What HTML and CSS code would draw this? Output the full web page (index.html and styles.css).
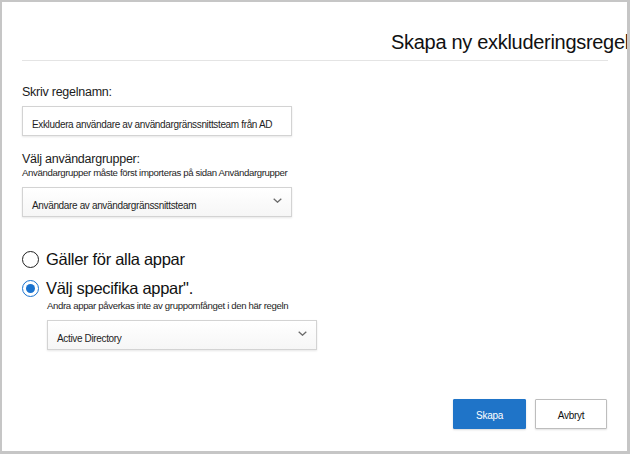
FILE: index.html
```html
<!DOCTYPE html>
<html lang="sv">
<head>
<meta charset="utf-8">
<title>Skapa ny exkluderingsregel</title>
<link rel="stylesheet" href="styles.css">
</head>
<body>
<div class="panel">
  <div class="header">
    <h1 class="title">Skapa ny exkluderingsregel</h1>
  </div>
  <div class="form">
    <div class="label label-name">Skriv regelnamn:</div>
    <div class="field input"><span class="field-text">Exkludera användare av användargränssnittsteam från AD</span></div>

    <div class="label label-groups">Välj användargrupper:</div>
    <div class="hint">Användargrupper måste först importeras på sidan Användargrupper</div>
    <div class="field select">
      <span class="field-text">Användare av användargränssnittsteam</span>
      <svg class="chev" viewBox="0 0 9 5" width="9" height="5"><polyline points="0.7,0.7 4.5,4.2 8.3,0.7" fill="none" stroke="#6a6a6a" stroke-width="1.3"/></svg>
    </div>

    <div class="radios">
      <div class="radio-row"><span class="radio"></span><span>Gäller för alla appar</span></div>
      <div class="radio-row"><span class="radio checked"></span><span>Välj specifika appar".</span></div>
    </div>
    <div class="sub">
      <div class="hint">Andra appar påverkas inte av gruppomfånget i den här regeln</div>
      <div class="field select">
        <span class="field-text">Active Directory</span>
        <svg class="chev" viewBox="0 0 9 5" width="9" height="5"><polyline points="0.7,0.7 4.5,4.2 8.3,0.7" fill="none" stroke="#6a6a6a" stroke-width="1.3"/></svg>
      </div>
    </div>
  </div>
  <div class="footer">
    <div class="btn btn-primary">Skapa</div>
    <div class="btn btn-secondary">Avbryt</div>
  </div>
</div>
</body>
</html>
```

FILE: styles.css
```css
* { box-sizing: border-box; }
html, body { margin: 0; padding: 0; }
body {
  background: #c6c6c6;
  font-family: "Liberation Sans", Arial, sans-serif;
  width: 630px;
  height: 454px;
  overflow: hidden;
  padding-top: 2px;
}
.panel {
  margin: 0 3px 0 2px;
  height: 449px;
  background: #fff;
  overflow: hidden;
}
.header {
  margin: 0 19px 0 20px;
  padding: 28px 0 6px;
  border-bottom: 1px solid #e4e4e4;
}
.title {
  margin: 0;
  padding-left: 369px;
  font-size: 20px;
  line-height: 24px;
  font-weight: normal;
  letter-spacing: -0.3px;
  white-space: nowrap;
  color: #111;
}
.form { padding: 0 20px; }
.label {
  font-size: 12.5px;
  line-height: 16px;
  letter-spacing: -0.25px;
  color: #1b1b1b;
}
.label-name { margin-top: 23px; }
.label-groups { margin-top: 15px; }
.hint {
  font-size: 9.6px;
  line-height: 12px;
  letter-spacing: -0.35px;
  color: #1e1e1e;
  white-space: nowrap;
}
.field {
  height: 30px;
  width: 270px;
  border: 1px solid #d3d3d3;
  display: flex;
  align-items: center;
  padding-left: 9px;
  font-size: 10px;
  letter-spacing: -0.35px;
  color: #1e1e1e;
  box-shadow: 0 1px 2px rgba(0, 0, 0, 0.1);
  background: #fff;
}
.field-text { flex: 1; padding-top: 6px; white-space: nowrap; }
.input { margin-top: 6px; }
.select {
  margin-top: 8px;
  background: linear-gradient(#ffffff, #f6f6f6);
}
.chev { flex: none; margin: 0 9px 3px 0; }
.radios {
  margin-top: 32px;
  display: flex;
  flex-direction: column;
  gap: 9px;
}
.radio-row {
  display: flex;
  align-items: center;
  gap: 7px;
  font-size: 16.5px;
  line-height: 20px;
  letter-spacing: -0.3px;
  color: #111;
}
.radio {
  flex: none;
  width: 17px;
  height: 17px;
  border-radius: 50%;
  border: 1.5px solid #222;
}
.radio.checked {
  border-color: #1a73cf;
  display: flex;
  align-items: center;
  justify-content: center;
}
.radio.checked::after {
  content: "";
  width: 9px;
  height: 9px;
  border-radius: 50%;
  background: #1a73cf;
}
.sub { padding-left: 25px; margin-top: 2px; }
.footer {
  display: flex;
  justify-content: flex-end;
  gap: 9px;
  padding-right: 20px;
  margin-top: 49px;
}
.btn {
  height: 30px;
  display: flex;
  align-items: center;
  justify-content: center;
  padding-top: 3px;
  font-size: 10px;
  letter-spacing: -0.3px;
  border-radius: 1px;
}
.btn-primary {
  width: 73px;
  background: #1f74c8;
  border: 1px solid #1f74c8;
  color: #fff;
  box-shadow: 0 1px 2px rgba(0, 0, 0, 0.15);
}
.btn-secondary {
  width: 72px;
  background: #fff;
  border: 1px solid #bdbdbd;
  color: #111;
  box-shadow: 0 1px 2px rgba(0, 0, 0, 0.12);
}
```
